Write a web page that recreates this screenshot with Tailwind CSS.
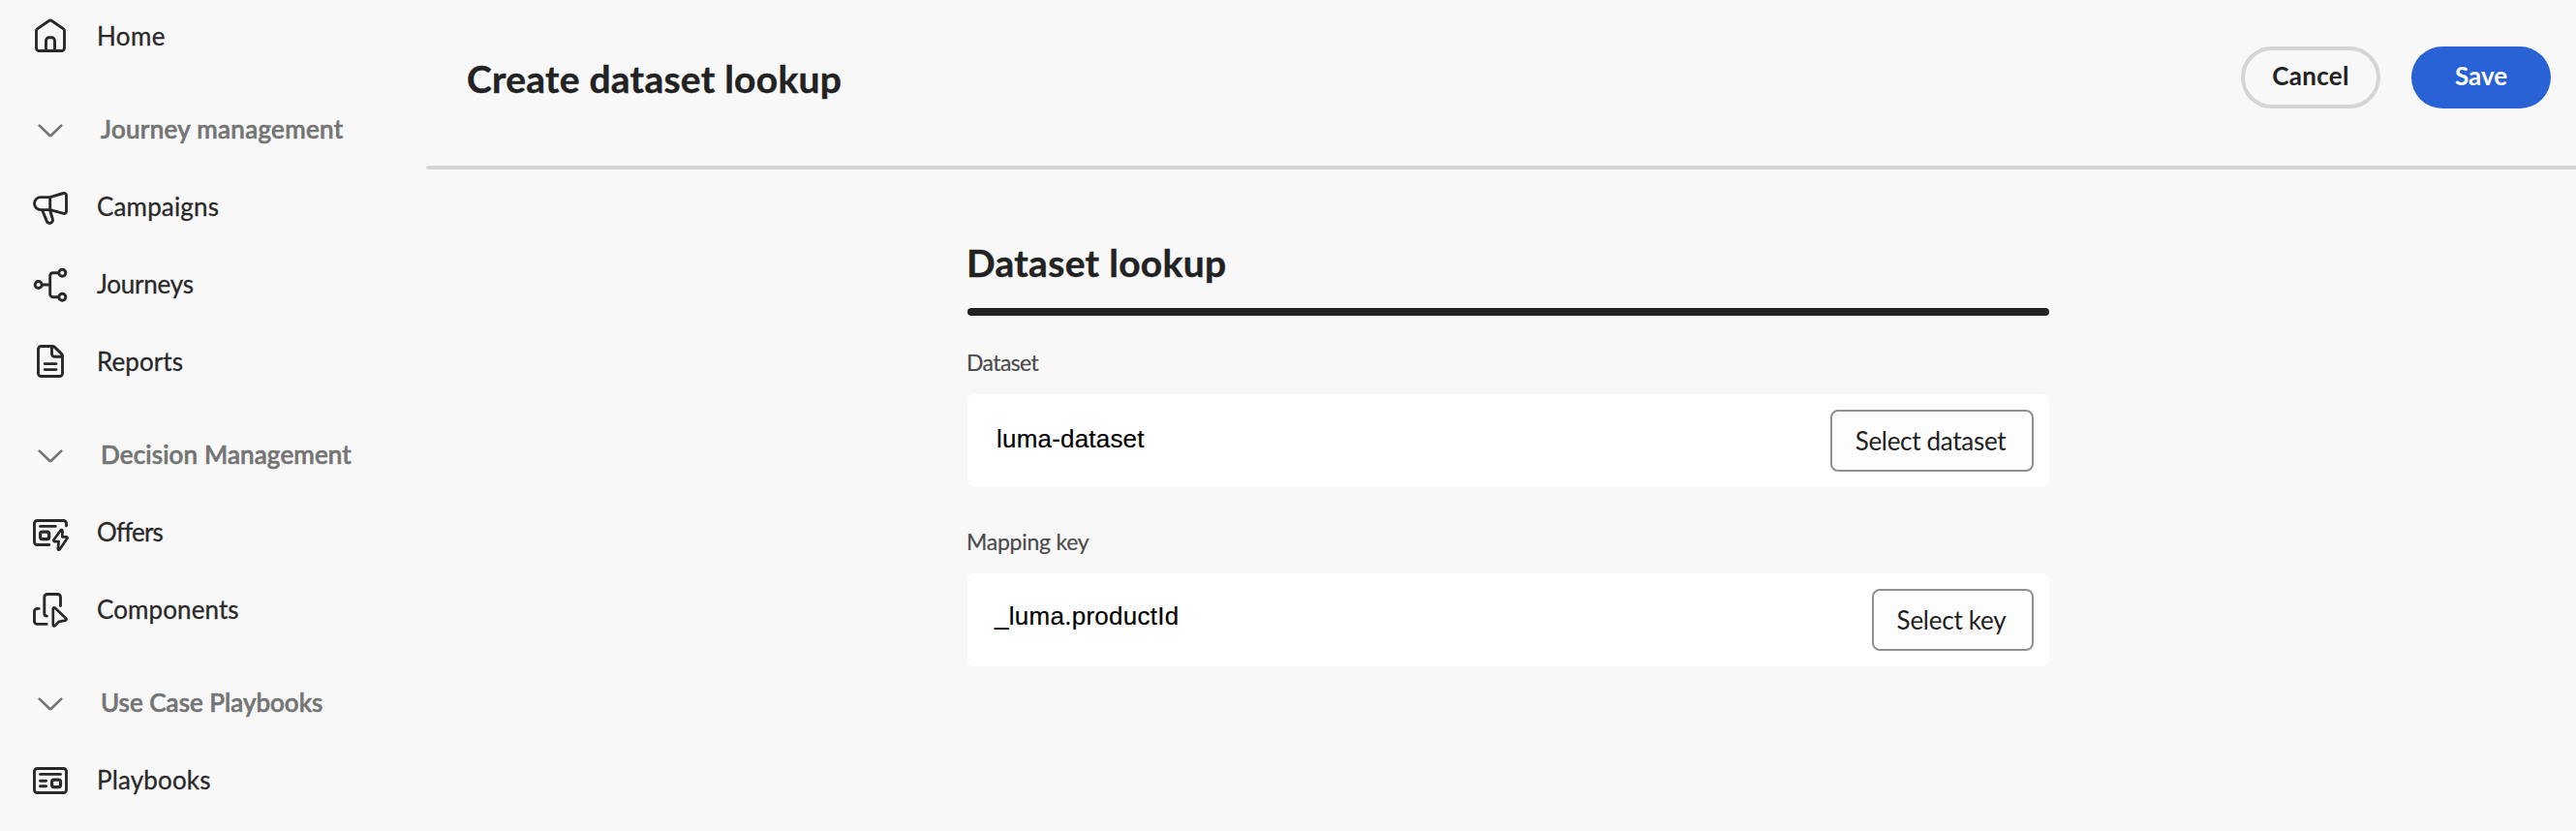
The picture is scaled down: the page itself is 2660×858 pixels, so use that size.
<!DOCTYPE html>
<html lang="en">
<head>
<meta charset="utf-8">
<title>Create dataset lookup</title>
<script src="https://cdn.jsdelivr.net/npm/@tailwindcss/browser@4"></script>
</head>
<body class="bg-[#f8f8f8] font-['Lato','Noto_Sans',sans-serif] text-[26px] text-[#292929]">
<div class="flex h-[858px] w-[2660px] overflow-hidden">
  <nav class="w-[440px] shrink-0 -mt-[3px] whitespace-nowrap [-webkit-text-stroke:0.3px]">
    <a class="flex h-20 items-center gap-7 pl-8">
      <svg class="size-10 shrink-0" viewBox="0 0 40 40" fill="none" stroke="currentColor" stroke-width="2.9" stroke-linecap="round" stroke-linejoin="round"><path d="M18.6 4.5a2.4 2.4 0 0 1 2.8 0L33.3 12.6a2.8 2.8 0 0 1 1.2 2.3V32.5a3 3 0 0 1-3 3H8.5a3 3 0 0 1-3-3V14.9a2.8 2.8 0 0 1 1.2-2.3z"/><path d="M15.5 35V24.8a3 3 0 0 1 3-3h3a3 3 0 0 1 3 3V35"/></svg>
      <span class="pt-px tracking-[0.4px]">Home</span>
    </a>
    <div class="mt-4 flex h-20 items-center gap-8 pl-8 font-medium text-[#747474]">
      <svg class="size-10 shrink-0" viewBox="0 0 40 40" fill="none" stroke="currentColor" stroke-width="2.6" stroke-linecap="round" stroke-linejoin="round"><path d="M8.7 16.6L18.9 26.5a1.6 1.6 0 0 0 2.2 0L31.3 16.6"/></svg>
      <span class="tracking-[0.3px] [-webkit-text-stroke:0.7px]">Journey management</span>
    </div>
    <a class="flex h-20 items-center gap-7 pl-8">
      <svg class="size-10 shrink-0" viewBox="0 0 40 40" fill="none" stroke="currentColor" stroke-width="2.9" stroke-linecap="round" stroke-linejoin="round"><path d="M19.7 10.6H10a6.5 6.5 0 0 0 0 13h9.7zM19.7 10.6L33.6 6.5a2.2 2.2 0 0 1 2.9 2.1V25.2a2.2 2.2 0 0 1-2.9 2.1L19.7 23.6M12 24.8L16.3 35.4a3.2 3.2 0 0 0 6-2.4L19.9 25"/></svg>
      <span class="tracking-[0.15px]">Campaigns</span>
    </a>
    <a class="flex h-20 items-center gap-7 pl-8">
      <svg class="size-10 shrink-0" viewBox="0 0 40 40" fill="none" stroke="currentColor" stroke-width="2.9"><circle cx="7.7" cy="21" r="3.5"/><circle cx="32.3" cy="8.7" r="3.5"/><circle cx="32.3" cy="33.7" r="3.5"/><path d="M11.2 21H19.7M28.8 8.7H22.7a3 3 0 0 0-3 3V30.7a3 3 0 0 0 3 3h6.1"/></svg>
      <span class="tracking-[-0.23px]">Journeys</span>
    </a>
    <a class="flex h-20 items-center gap-7 pl-8">
      <svg class="size-10 shrink-0" viewBox="0 0 40 40" fill="none" stroke="currentColor" stroke-width="2.9" stroke-linecap="round" stroke-linejoin="round"><path d="M10.5 4.5H22.3a3 3 0 0 1 2.1.9L31.6 12.4a3 3 0 0 1 .9 2.1V32.5a3 3 0 0 1-3 3H10.5a3 3 0 0 1-3-3V7.5a3 3 0 0 1 3-3zM21.5 5V12.3a3 3 0 0 0 3 3H32M14.2 22.6H26M14.2 28.6H26"/></svg>
      <span class="pt-px tracking-[0.07px]">Reports</span>
    </a>
    <div class="mt-4 flex h-20 items-center gap-8 pl-8 font-medium text-[#747474]">
      <svg class="size-10 shrink-0" viewBox="0 0 40 40" fill="none" stroke="currentColor" stroke-width="2.6" stroke-linecap="round" stroke-linejoin="round"><path d="M8.7 16.6L18.9 26.5a1.6 1.6 0 0 0 2.2 0L31.3 16.6"/></svg>
      <span class="tracking-[0.14px] [-webkit-text-stroke:0.7px]">Decision Management</span>
    </div>
    <a class="flex h-20 items-center gap-7 pl-8">
      <svg class="size-10 shrink-0 overflow-visible" viewBox="0 0 40 40" fill="none" stroke="currentColor" stroke-width="2.9" stroke-linecap="round" stroke-linejoin="round"><path d="M18.8 33.5H6.5a3 3 0 0 1-3-3V11.5a3 3 0 0 1 3-3H33.5a3 3 0 0 1 3 3V14M9.5 14.4H25.3"/><rect x="9.6" y="20.2" width="9.1" height="7.4" rx="2" stroke-width="3.2"/><path stroke-width="2.7" d="M30.6 18.6L23.6 28.3c-.6.9-.2 1.8.8 1.8h4.2l-.7 7.6c0 1.1 1.1 1.4 1.7.5L37.3 27c.6-.9.2-1.7-.8-1.7h-4.2l.2-6.1c0-1.2-1.2-1.5-1.9-.6z"/></svg>
      <span class="tracking-[-0.82px]">Offers</span>
    </a>
    <a class="flex h-20 items-center gap-7 pl-8">
      <svg class="size-10 shrink-0" viewBox="0 0 40 40" fill="none" stroke="currentColor" stroke-width="2.9" stroke-linecap="round" stroke-linejoin="round"><path d="M30.5 16.6V7.5a3 3 0 0 0-3-3H16.8a3 3 0 0 0-3 3V24.5a2.6 2.6 0 0 0 2.6 2.6M8.2 19.4H6.5a3 3 0 0 0-3 3V32.4a3 3 0 0 0 3 3H16.2"/><path stroke-width="2.7" d="M22.8 19.6V36c0 1.5 1.3 1.9 2.3.9l3.6-4.1 6.7-1.1c1.3-.3 1.6-1.5.7-2.3L24.9 18.7c-1-.8-2.1-.3-2.1.9z"/></svg>
      <span class="pt-px tracking-[0.1px]">Components</span>
    </a>
    <div class="mt-4 flex h-20 items-center gap-8 pl-8 font-medium text-[#747474]">
      <svg class="size-10 shrink-0" viewBox="0 0 40 40" fill="none" stroke="currentColor" stroke-width="2.6" stroke-linecap="round" stroke-linejoin="round"><path d="M8.7 16.6L18.9 26.5a1.6 1.6 0 0 0 2.2 0L31.3 16.6"/></svg>
      <span class="tracking-[0.02px] [-webkit-text-stroke:0.7px]">Use Case Playbooks</span>
    </div>
    <a class="flex h-20 items-center gap-7 pl-8">
      <svg class="size-10 shrink-0" viewBox="0 0 40 40" fill="none" stroke="currentColor" stroke-width="2.9" stroke-linecap="round" stroke-linejoin="round"><rect x="3.5" y="8.5" width="33" height="25" rx="3"/><path d="M9.5 14.4H30.5M9.5 21.3H15.6M9.5 26.7H15.6"/><rect x="21.6" y="20.2" width="8.9" height="7.4" rx="2" stroke-width="3.2"/></svg>
      <span class="tracking-[0.16px]">Playbooks</span>
    </a>
  </nav>

  <main class="flex-1 text-[#222222]">
    <header class="flex h-[171px] items-start justify-between pt-12 pr-[26px] pl-[42px]">
      <h1 class="mt-px text-[39px] leading-[64px] font-bold tracking-[0.25px] [-webkit-text-stroke:0.4px]">Create dataset lookup</h1>
      <div class="flex gap-8 font-bold">
        <button class="h-16 w-36 rounded-full border-4 border-[#d5d5d5] pb-[3px] tracking-[0.3px]">Cancel</button>
        <button class="h-16 w-36 rounded-full bg-[#2962d4] pb-[3px] text-white">Save</button>
      </div>
    </header>
    <div class="h-1 rounded-l-full bg-[#d4d4d4]"></div>

    <section class="ml-[559px] w-[1117px] pt-[73px]">
      <h2 class="-ml-px text-[39px] leading-[47px] font-bold tracking-[0.3px] [-webkit-text-stroke:0.4px]">Dataset lookup</h2>
      <div class="mt-[23px] h-2 rounded-full bg-[#222222]"></div>

      <div class="mt-[33px] -ml-px text-[23px] leading-[30px] tracking-[-0.6px] text-[#4b4b4b] [-webkit-text-stroke:0.2px]">Dataset</div>
      <div class="mt-[18px] flex h-24 items-center justify-between rounded-lg bg-white pr-4 pl-[30px]">
        <span class="pb-1 font-['Liberation_Sans',sans-serif] tracking-[0.2px] text-black [-webkit-text-stroke:0.2px]">luma-dataset</span>
        <button class="h-16 w-[210px] rounded-lg border-2 border-[#909090] bg-[#fdfdfd] pr-[3px] tracking-[-0.3px]">Select dataset</button>
      </div>

      <div class="mt-[41px] -ml-px text-[23px] leading-[30px] tracking-[-0.25px] text-[#4b4b4b] [-webkit-text-stroke:0.2px]">Mapping key</div>
      <div class="mt-[18px] flex h-24 items-center justify-between rounded-lg bg-white pr-4 pl-7">
        <span class="pb-2 font-['Liberation_Sans',sans-serif] tracking-[0.27px] text-black [-webkit-text-stroke:0.2px]">_luma.productId</span>
        <button class="h-16 w-[167px] rounded-lg border-2 border-[#909090] bg-[#fdfdfd] pr-[3px] tracking-[-0.25px]">Select key</button>
      </div>
    </section>
  </main>
</div>
</body>
</html>
